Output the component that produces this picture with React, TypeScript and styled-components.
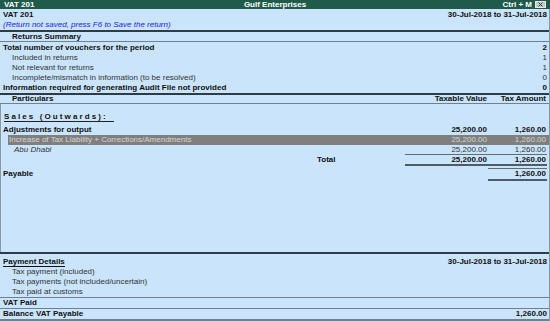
import React from 'react'
import styled, { createGlobalStyle, css } from 'styled-components'

const summary = [
  { label: 'Total number of vouchers for the period', value: '2', bold: true },
  { label: 'Included in returns', value: '1', indent: true },
  { label: 'Not relevant for returns', value: '1', indent: true },
  { label: 'Incomplete/mismatch in information (to be resolved)', value: '0', indent: true },
  { label: 'Information required for generating Audit File not provided', value: '0', bold: true },
]

const payments = ['Tax payment (included)', 'Tax payments (not included/uncertain)', 'Tax paid at customs']

const GlobalStyle = createGlobalStyle`
  html, body {
    margin: 0;
    padding: 0;
    background: #c9e4fb;
  }
  body {
    font-family: 'Liberation Sans', Arial, sans-serif;
    font-size: 8px;
    color: #222;
  }
`

const Screen = styled.div`
  width: 550px;
  height: 321px;
  display: flex;
  flex-direction: column;
  background: #c9e4fb;
  overflow: hidden;
`

const TitleBar = styled.div`
  flex: none;
  height: 9px;
  line-height: 9px;
  background: #1f5a4a;
  color: #fff;
  font-weight: bold;
  display: grid;
  grid-template-columns: 1fr auto 1fr;
  align-items: center;
  padding: 0 4px 0 4px;
  white-space: nowrap;
`

const TitleRight = styled.div`
  display: flex;
  justify-content: flex-end;
  align-items: center;
  gap: 3px;
`

const CloseBox = styled.div`
  width: 11px;
  height: 7px;
  background: #c4ccc8;
  border: 1px solid #e8ece8;
  box-sizing: border-box;
  display: flex;
  align-items: center;
  justify-content: center;
`

const Body = styled.div`
  flex: 1;
  display: flex;
  flex-direction: column;
  border-right: 1px solid #8496a6;
  min-height: 0;
`

const Header = styled.div`
  padding-top: 1px;
`

const Line = styled.div<{ $h?: number }>`
  display: flex;
  justify-content: space-between;
  height: ${(p) => p.$h ?? 10}px;
  line-height: ${(p) => p.$h ?? 10}px;
  padding: 0 2px 0 3px;
  white-space: nowrap;
`

const Strong = styled.span`
  font-weight: bold;
  color: #111;
`

const Note = styled.span`
  font-style: italic;
  color: #1c1cde;
`

const Thick = styled.div`
  flex: none;
  height: 2px;
  background: #2f3c46;
`

const SectionHead = styled.div<{ $h: number }>`
  flex: none;
  display: grid;
  grid-template-columns: 1fr 83px 59px;
  height: ${(p) => p.$h}px;
  line-height: ${(p) => p.$h}px;
  padding: 0 2px 0 12px;
  font-weight: bold;
  color: #111;
  border-bottom: 1px solid #6f808e;
  white-space: nowrap;
`

const HeadCell = styled.div`
  text-align: right;
  padding-right: 1px;
`

const SummaryList = styled.div`
  padding-top: 1px;
`

const SummaryRow = styled(Line)<{ $bold?: boolean; $indent?: boolean }>`
  padding-left: ${(p) => (p.$indent ? 12 : 3)}px;
  ${(p) =>
    p.$bold
      ? css`
          font-weight: bold;
          color: #111;
        `
      : css`
          color: #333;
        `}
`

const Particulars = styled.div`
  display: flex;
  flex-direction: column;
  border-left: 1px solid #8a9aa8;
  padding-top: 8px;
`

const SalesHead = styled.div`
  height: 9px;
  line-height: 9px;
  margin-left: 3px;
  width: 110px;
  border-bottom: 1px solid #222;
  font-weight: bold;
  letter-spacing: 2.1px;
  color: #111;
  margin-bottom: 3px;
  white-space: nowrap;
`

const Row = styled.div<{ $h?: number; $bold?: boolean; $italic?: boolean; $hl?: boolean; $indent?: number }>`
  display: grid;
  grid-template-columns: 1fr 83px 59px;
  height: ${(p) => p.$h ?? 10}px;
  line-height: ${(p) => p.$h ?? 10}px;
  padding-right: 2px;
  padding-left: ${(p) => p.$indent ?? 2}px;
  white-space: nowrap;
  font-weight: ${(p) => (p.$bold ? 'bold' : 'normal')};
  color: ${(p) => (p.$bold ? '#111' : '#333')};
  ${(p) =>
    p.$hl &&
    css`
      background: #7f7f7f;
      color: #d6d6d6;
      margin-left: 7px;
      padding-left: 1px;
      margin-right: 0;
    `}
`

const Label = styled.div<{ $italic?: boolean; $pad?: number }>`
  font-style: ${(p) => (p.$italic ? 'italic' : 'normal')};
  padding-left: ${(p) => p.$pad ?? 0}px;
`

const Amount = styled.div`
  text-align: right;
  padding-right: 1px;
`

const RuleRow = styled.div<{ $weight: number; $from: number; $gap?: number }>`
  display: grid;
  grid-template-columns: 1fr 83px 59px;
  padding-right: 2px;
  margin-top: ${(p) => p.$gap ?? 0}px;
  &::after {
    content: '';
    grid-column: ${(p) => p.$from} / 4;
    height: ${(p) => p.$weight}px;
    background: ${(p) => (p.$weight > 1 ? '#4f5b66' : '#5d6c79')};
  }
`

const Spacer = styled.div`
  flex: 1;
  border-left: 1px solid #8a9aa8;
`

const Footer = styled.div`
  flex: none;
  display: flex;
  flex-direction: column;
`

const PaymentHead = styled(Line)`
  margin-top: 3px;
`

const Underlined = styled.span`
  font-weight: bold;
  color: #111;
  border-bottom: 1px solid #111;
  line-height: 8px;
  display: inline-block;
  height: 8px;
  margin-top: 1px;
`

const PayItem = styled(Line)`
  padding-left: 12px;
  color: #333;
`

const Thin = styled.div<{ $h?: number }>`
  height: ${(p) => p.$h ?? 1}px;
  background: #6f808e;
`

export default function App() {
  return (
    <Screen>
      <GlobalStyle />
      <TitleBar>
        <span>VAT 201</span>
        <span>Gulf Enterprises</span>
        <TitleRight>
          <span>Ctrl + M</span>
          <CloseBox>
            <svg width="5" height="5" viewBox="0 0 5 5">
              <path d="M0.5 0.5L4.5 4.5M4.5 0.5L0.5 4.5" stroke="#333" strokeWidth="1" />
            </svg>
          </CloseBox>
        </TitleRight>
      </TitleBar>
      <Body>
        <Header>
          <Line>
            <Strong>VAT 201</Strong>
            <Strong>30-Jul-2018 to 31-Jul-2018</Strong>
          </Line>
          <Line>
            <Note>(Return not saved, press F6 to Save the return)</Note>
          </Line>
        </Header>
        <Thick />
        <SectionHead $h={9}>
          <span>Returns Summary</span>
        </SectionHead>
        <SummaryList>
          {summary.map((s) => (
            <SummaryRow key={s.label} $bold={s.bold} $indent={s.indent}>
              <span>{s.label}</span>
              <span>{s.value}</span>
            </SummaryRow>
          ))}
        </SummaryList>
        <Thick />
        <SectionHead $h={8}>
          <span>Particulars</span>
          <HeadCell>Taxable Value</HeadCell>
          <HeadCell>Tax Amount</HeadCell>
        </SectionHead>
        <Particulars>
          <SalesHead>Sales (Outwards):</SalesHead>
          <Row $bold>
            <Label>Adjustments for output</Label>
            <Amount>25,200.00</Amount>
            <Amount>1,260.00</Amount>
          </Row>
          <Row $hl>
            <Label>Increase of Tax Liability + Corrections/Amendments</Label>
            <Amount>25,200.00</Amount>
            <Amount>1,260.00</Amount>
          </Row>
          <Row $h={9}>
            <Label $italic $pad={11}>Abu Dhabi</Label>
            <Amount>25,200.00</Amount>
            <Amount>1,260.00</Amount>
          </Row>
          <RuleRow $weight={1} $from={2} />
          <Row $h={9} $bold>
            <Label $pad={314}>Total</Label>
            <Amount>25,200.00</Amount>
            <Amount>1,260.00</Amount>
          </Row>
          <RuleRow $weight={2} $from={2} />
          <RuleRow $weight={1} $from={3} $gap={2} />
          <Row $bold>
            <Label>Payable</Label>
            <span />
            <Amount>1,260.00</Amount>
          </Row>
          <RuleRow $weight={2} $from={3} />
        </Particulars>
        <Spacer />
        <Footer>
          <Thick />
          <PaymentHead>
            <Underlined>Payment Details</Underlined>
            <Strong>30-Jul-2018 to 31-Jul-2018</Strong>
          </PaymentHead>
          {payments.map((p) => (
            <PayItem key={p}>
              <span>{p}</span>
            </PayItem>
          ))}
          <Thin />
          <Line>
            <Strong>VAT Paid</Strong>
          </Line>
          <Thin />
          <Line>
            <Strong>Balance VAT Payable</Strong>
            <Strong>1,260.00</Strong>
          </Line>
          <Thin $h={2} />
        </Footer>
      </Body>
    </Screen>
  )
}
